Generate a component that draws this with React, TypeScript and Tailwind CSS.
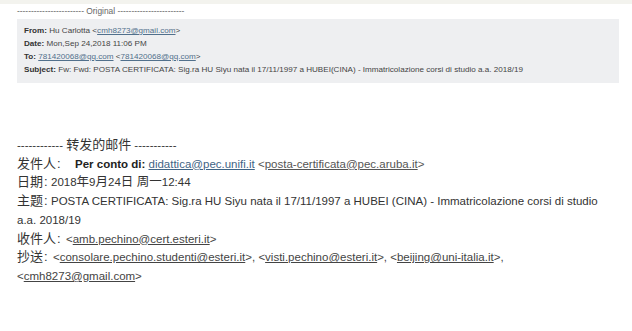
import { ReactNode } from 'react';

const latin = "font-['Liberation_Sans','Noto_Sans_CJK_SC',sans-serif]";

function Link({ children, className = '' }: { children: ReactNode; className?: string }) {
    return <span className={`underline underline-offset-1 ${className}`}>{children}</span>;
}

function Label({ text, className }: { text: string; className: string }) {
    return (
        <span className={`inline-block text-[13px] text-[#333] ${className}`}>
            {text}
            <span className="ml-[1px]">:</span>
        </span>
    );
}

export default function App() {
    return (
        <div className={`w-[632px] h-[331px] overflow-hidden bg-white ${latin}`}>
            <div className="h-[4px] bg-[#f3f3ee]" />

            {/* Original header block */}
            <div className="pl-[17px] pr-[13px]">
                <div className="h-[15px] flex items-center text-[8.4px] text-[#666]">
                    ------------------------ Original ------------------------
                </div>
                <div className="bg-[#eeeff1] pl-[7px] pt-[5px] pb-[7px] text-[8.1px] leading-[13px] text-[#444] whitespace-nowrap">
                    <div>
                        <b className="font-semibold text-[#333]">From:</b> Hu Carlotta &lt;<Link className="text-[#51708c]">cmh8273@gmail.com</Link>&gt;
                    </div>
                    <div>
                        <b className="font-semibold text-[#333]">Date:</b> Mon,Sep 24,2018 11:06 PM
                    </div>
                    <div>
                        <b className="font-semibold text-[#333]">To:</b> <Link className="text-[#51708c]">781420068@qq.com</Link> &lt;<Link className="text-[#51708c]">781420068@qq.com</Link>&gt;
                    </div>
                    <div>
                        <b className="font-semibold text-[#333]">Subject:</b> Fw: Fwd: POSTA CERTIFICATA: Sig.ra HU Siyu nata il 17/11/1997 a HUBEI(CINA) - Immatricolazione corsi di studio a.a. 2018/19
                    </div>
                </div>
            </div>

            {/* Forwarded message */}
            <div className="pl-[17px] pt-[53px] text-[11.5px] leading-[18.7px] text-[#333] whitespace-nowrap">
                <div>
                    ------------ <span className="text-[13px]">转发的邮件</span> -----------
                </div>
                <div>
                    <Label text="发件人" className="w-[58px]" />
                    <b className="font-semibold text-[#222]">Per conto di:</b> <Link className="text-[#3f6485]">didattica@pec.unifi.it</Link>{' '}
                    <span className="text-[#555]">&lt;<Link>posta-certificata@pec.aruba.it</Link>&gt;</span>
                </div>
                <div>
                    <Label text="日期" className="w-[34px]" />
                    2018<span className="text-[12.5px]">年</span>9<span className="text-[12.5px]">月</span>24<span className="text-[12.5px]">日 周一</span>12:44
                </div>
                <div>
                    <Label text="主题" className="w-[34px]" />
                    POSTA CERTIFICATA: Sig.ra HU Siyu nata il 17/11/1997 a HUBEI (CINA) - Immatricolazione corsi di studio
                    <br />
                    a.a. 2018/19
                </div>
                <div className="text-[#444]">
                    <Label text="收件人" className="w-[49px]" />
                    &lt;<Link>amb.pechino@cert.esteri.it</Link>&gt;
                </div>
                <div className="text-[#444]">
                    <Label text="抄送" className="w-[36px]" />
                    &lt;<Link>consolare.pechino.studenti@esteri.it</Link>&gt;, &lt;<Link>visti.pechino@esteri.it</Link>&gt;, &lt;<Link>beijing@uni-italia.it</Link>&gt;,
                    <br />
                    &lt;<Link>cmh8273@gmail.com</Link>&gt;
                </div>
            </div>
        </div>
    );
}
